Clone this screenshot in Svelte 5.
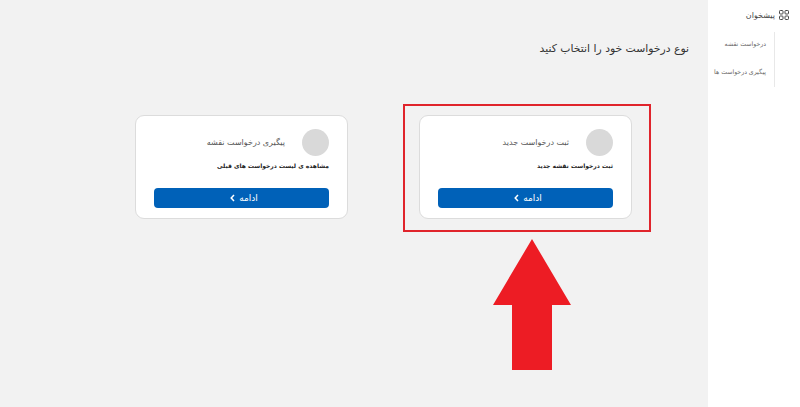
<script>
  const cards = [
    { title: "ثبت درخواست جدید", desc: "ثبت درخواست نقشه جدید" },
    { title: "پیگیری درخواست نقشه", desc: "مشاهده ی لیست درخواست های قبلی" },
  ];
  const links = ["درخواست نقشه", "پیگیری درخواست ها"];
</script>

<div class="page" dir="rtl">
  <aside class="sidebar">
    <div class="brand">
      <svg width="10" height="10" viewBox="0 0 10 10" fill="none" stroke="#444" stroke-width="1">
        <rect x="0.5" y="0.5" width="3.5" height="3.5" rx="0.8" />
        <rect x="6" y="0.5" width="3.5" height="3.5" rx="0.8" />
        <rect x="0.5" y="6" width="3.5" height="3.5" rx="0.8" />
        <rect x="6" y="6" width="3.5" height="3.5" rx="0.8" />
      </svg>
      <span>پیشخوان</span>
    </div>
    <ul class="links">
      {#each links as link}
        <li>{link}</li>
      {/each}
    </ul>
  </aside>

  <main class="content">
    <h1>نوع درخواست خود را انتخاب کنید</h1>
    <div class="cards">
      {#each cards as card}
        <section class="card">
          <div class="card-head">
            <span class="avatar"></span>
            <h2>{card.title}</h2>
          </div>
          <p>{card.desc}</p>
          <button type="button">
            ادامه
            <svg width="5" height="8" viewBox="0 0 5 8" fill="none" stroke="#fff" stroke-width="1.5">
              <path d="M4 1 L1.2 4 L4 7" />
            </svg>
          </button>
        </section>
      {/each}
    </div>
  </main>

  <div class="highlight"></div>
  <svg class="arrow" width="80" height="132" viewBox="0 0 80 132">
    <path d="M40 0 L79 66 L60 66 L60 131 L20 131 L20 66 L1 66 Z" fill="#ed1c24" />
  </svg>
</div>

<style>
  :global(body) {
    margin: 0;
    background: #f2f2f2;
  }
  .page {
    position: relative;
    display: flex;
    height: 407px;
    overflow: hidden;
    background: #f2f2f2;
    font-family: "DejaVu Sans", "Noto Sans", sans-serif;
    color: #333;
  }
  .sidebar {
    width: 92px;
    flex-shrink: 0;
    background: #fff;
    padding: 10px 11px 0 0;
    box-sizing: border-box;
  }
  .brand {
    display: flex;
    align-items: center;
    gap: 4px;
    height: 10px;
    font-size: 8px;
    color: #444;
  }
  .links {
    list-style: none;
    margin: 12px 14px 0 0;
    padding: 0 8px 0 0;
    height: 55px;
    width: 50px;
    border-right: 1px solid #e8e8e8;
    font-size: 6.2px;
    color: #666;
    white-space: nowrap;
  }
  .links li {
    height: 28px;
    line-height: 24px;
  }
  .content {
    flex: 1;
    padding: 41px 19px 0 0;
    min-width: 0;
  }
  h1 {
    margin: 0;
    font-size: 10.8px;
    font-weight: 400;
    line-height: 16px;
    color: #333;
  }
  .cards {
    display: flex;
    gap: 71px;
    margin-top: 58px;
    margin-right: 57px;
  }
  .card {
    width: 213px;
    height: 104px;
    box-sizing: border-box;
    padding: 13px 18px 0;
    background: #fff;
    border: 1px solid #dcdcdc;
    border-radius: 9px;
  }
  .card-head {
    display: flex;
    align-items: center;
    gap: 17px;
  }
  .avatar {
    width: 27px;
    height: 27px;
    border-radius: 50%;
    background: #d9d9d9;
  }
  h2 {
    margin: 0;
    font-size: 8px;
    font-weight: 400;
    color: #555;
  }
  p {
    margin: 4px 0 0;
    font-size: 6px;
    line-height: 12px;
    font-weight: 700;
    color: #222;
  }
  button {
    display: flex;
    width: 100%;
    height: 20px;
    margin-top: 16px;
    align-items: center;
    justify-content: center;
    gap: 4px;
    padding: 0 0 0 5px;
    border: none;
    border-radius: 4px;
    background: #0061b8;
    color: #fff;
    font: inherit;
    font-size: 9px;
  }
  .highlight {
    position: absolute;
    left: 403px;
    top: 104px;
    width: 248px;
    height: 128px;
    box-sizing: border-box;
    border: 2px solid #e0242c;
  }
  .arrow {
    position: absolute;
    left: 492px;
    top: 239px;
  }
</style>
